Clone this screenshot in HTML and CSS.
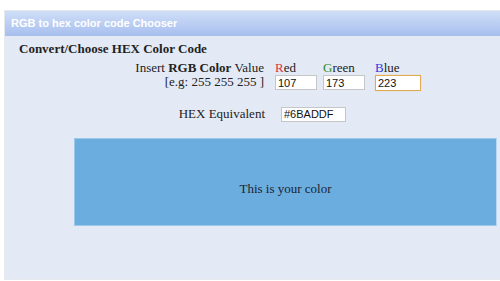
FILE: index.html
```html
<!DOCTYPE html>
<html lang="en">
<head>
    <meta charset="UTF-8">
    <title>RGB to hex color code Chooser</title>
    <link rel="stylesheet" href="styles.css">
</head>
<body>
    <div class="panel">
        <div class="panel-head">RGB to hex color code Chooser</div>
        <div class="panel-body">
            <h3>Convert/Choose HEX Color Code</h3>
            <div class="rgb-grid">
                <div class="lbl">Insert <b>RGB Color</b> Value</div>
                <div><span class="r">R</span>ed</div>
                <div><span class="g">G</span>reen</div>
                <div><span class="b">B</span>lue</div>
                <div class="lbl">[e.g: 255 255 255 ]</div>
                <div><input type="text" class="num" value="107"></div>
                <div><input type="text" class="num" value="173"></div>
                <div><input type="text" class="num focused" value="223"></div>
            </div>
            <div class="hex-row">
                <div class="lbl">HEX Equivalent</div>
                <input type="text" class="hex" value="#6BADDF">
            </div>
            <div class="swatch" style="background:#6BADDF">This is your color</div>
        </div>
    </div>
</body>
</html>
```

FILE: styles.css
```css
html, body { margin: 0; background: #fff; overflow: hidden; }
body { font-family: "Liberation Serif", serif; font-size: 13px; color: #222; }
.panel { margin: 10px 0 0 4px; border: 1px solid #e6e8ec; border-right: none; }
.panel-head {
    height: 25px; line-height: 25px; padding-left: 6px;
    background: linear-gradient(#cfdef8, #a7bfee);
    color: #fff; font-family: "Liberation Sans", sans-serif; font-size: 11px; font-weight: bold;
}
.panel-body { background: #e4eaf5; padding: 5px 0 52px 0; height: 186px; }
h3 { margin: 0 0 0 14px; font-size: 13px; line-height: 16px; }
.rgb-grid {
    display: grid; grid-template-columns: 270px 48px 52px 50px;
    line-height: 14px; margin-top: 4px;
}
.rgb-grid .lbl { text-align: right; padding-right: 11px; }
.r { color: #e8303a; }
.g { color: #2a8a2a; }
.b { color: #3636e0; }
input {
    box-sizing: border-box; margin: 0; height: 15px; padding: 0 2px;
    border: 1px solid #c4c6c8; background: #fff;
    font-family: "Liberation Sans", sans-serif; font-size: 11px; color: #111;
}
.num { width: 42px; }
.num.focused { width: 46px; height: 16px; border-color: #e2aa55; box-shadow: 0 0 1px #f2c880; }
.hex-row { display: flex; align-items: center; margin-top: 15px; }
.hex-row .lbl { width: 260px; text-align: right; }
.hex { width: 65px; margin-left: 16px; }
.swatch {
    box-sizing: border-box; height: 88px; margin: 16px 3px 0 69px; padding-top: 13px;
    border: 1px solid #9cc8ea; border-right-color: #b8d8f2;
    display: flex; align-items: center; justify-content: center;
    color: #1a2430;
}
```
